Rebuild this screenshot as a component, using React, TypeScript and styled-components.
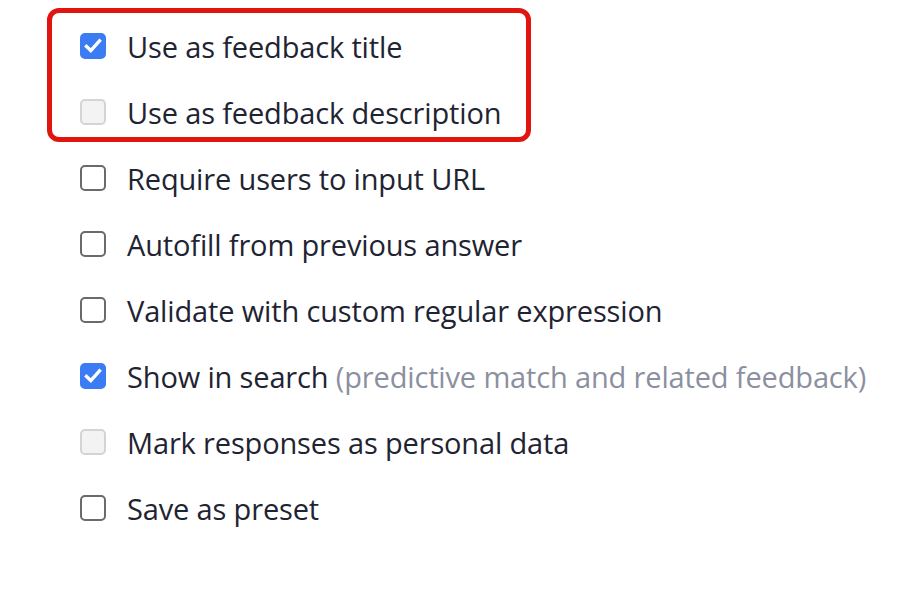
import React from 'react';
import styled, { createGlobalStyle } from 'styled-components';

const GlobalStyle = createGlobalStyle`
  body {
    margin: 0;
    background: #ffffff;
    font-family: "Open Sans", "Noto Sans", sans-serif;
    color: #1f2433;
  }
`;

const Page = styled.div`
  display: flex;
  flex-direction: column;
  padding-bottom: 40px;
`;

const Highlight = styled.div`
  width: 446px;
  height: 124px;
  margin: 8px 0 3px 47px;
  padding-left: 28px;
  border: 5px solid #e2140e;
  border-radius: 12px;
`;

const Row = styled.label<{ $inset?: boolean }>`
  display: flex;
  align-items: center;
  height: 66px;
  padding-left: ${(p) => (p.$inset ? 0 : 80)}px;
  gap: 21px;
  font-size: 29px;
  letter-spacing: -0.15px;
  white-space: nowrap;
`;

const Box = styled.span<{ $state: 'on' | 'off' | 'disabled' }>`
  flex: 0 0 auto;
  display: flex;
  align-items: center;
  justify-content: center;
  width: 26px;
  height: 26px;
  box-sizing: border-box;
  border-radius: 5px;
  background: ${(p) =>
    p.$state === 'on' ? '#3b7bf3' : p.$state === 'disabled' ? '#f3f3f3' : '#ffffff'};
  border: 2px solid
    ${(p) => (p.$state === 'on' ? '#3b7bf3' : p.$state === 'disabled' ? '#d4d4d4' : '#6a6a6a')};
`;

const Hint = styled.span`
  color: #8b90a0;
`;

type State = 'on' | 'off' | 'disabled';

const Check: React.FC<{ state: State }> = ({ state }) => (
  <Box $state={state}>
    {state === 'on' && (
      <svg width="22" height="22" viewBox="0 0 22 22">
        <path
          d="M4.5 11.5 L8.8 15.6 L17.5 5.8"
          fill="none"
          stroke="#ffffff"
          strokeWidth="3.4"
          strokeLinecap="square"
          strokeLinejoin="miter"
        />
      </svg>
    )}
  </Box>
);

const options: { label: string; hint?: string; state: State }[] = [
  { label: 'Require users to input URL', state: 'off' },
  { label: 'Autofill from previous answer', state: 'off' },
  { label: 'Validate with custom regular expression', state: 'off' },
  { label: 'Show in search', hint: '(predictive match and related feedback)', state: 'on' },
  { label: 'Mark responses as personal data', state: 'disabled' },
  { label: 'Save as preset', state: 'off' },
];

const App: React.FC = () => {
  return (
    <Page>
      <GlobalStyle />
      <Highlight>
        <Row $inset>
          <Check state="on" />
          <span>Use as feedback title</span>
        </Row>
        <Row $inset>
          <Check state="disabled" />
          <span>Use as feedback description</span>
        </Row>
      </Highlight>
      {options.map((o) => (
        <Row key={o.label}>
          <Check state={o.state} />
          <span>
            {o.label}
            {o.hint && <Hint> {o.hint}</Hint>}
          </span>
        </Row>
      ))}
    </Page>
  );
};

export default App;
